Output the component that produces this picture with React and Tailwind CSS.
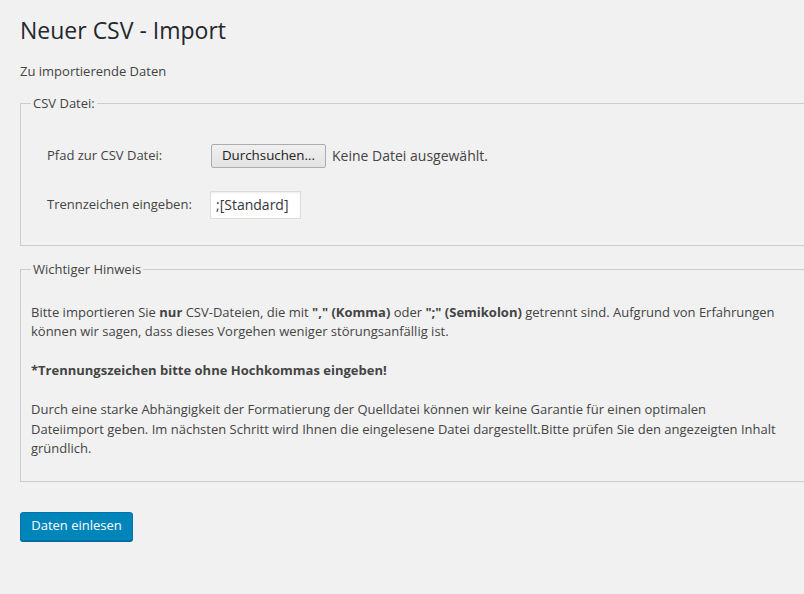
import React from 'react'

export default function App() {
  return (
    <div className="min-h-screen overflow-hidden bg-[#f1f1f1] pl-[20px] text-[13px] leading-[19.5px] text-[#444]"
         style={{ fontFamily: '"Open Sans", "Noto Sans", sans-serif' }}>
      <div className="w-[800px]">
        {/* Title */}
        <h1 className="pt-[16px] pb-[4px] text-[23px] leading-[29px] font-normal text-[#23282d]">
          Neuer CSV - Import
        </h1>
        <p className="mt-[13px]">Zu importierende Daten</p>

        {/* CSV Datei */}
        <fieldset className="mt-[12px] border border-[#ccc] px-[10px] pb-[26px]">
          <legend className="px-[2px]">CSV Datei:</legend>
          <div className="mt-[31px] flex flex-col gap-[23px] pl-[16px]">
            <div className="flex h-[24px] items-center">
              <span className="w-[164px]">Pfad zur CSV Datei:</span>
              <button className="h-[24px] w-[115px] rounded-[2px] border border-[#adadad] bg-gradient-to-b from-[#f0f0f0] to-[#e3e3e3] text-[13.33px] text-[#222]">
                Durchsuchen...
              </button>
              <span className="ml-[6px] text-[14px]">Keine Datei ausgewählt.</span>
            </div>
            <div className="flex h-[28px] items-center">
              <span className="w-[163px]">Trennzeichen eingeben:</span>
              <div className="flex h-[28px] w-[91px] items-center border border-[#ddd] bg-white px-[5px] text-[14px] text-[#32373c] shadow-[inset_0_1px_2px_rgba(0,0,0,0.07)]">
                ;[Standard]
              </div>
            </div>
          </div>
        </fieldset>

        {/* Wichtiger Hinweis */}
        <fieldset className="mt-[14px] border border-[#ccc] px-[10px] pb-[22px]">
          <legend className="px-[2px]">Wichtiger Hinweis</legend>
          <div className="mt-[23px] w-[748px]">
            <p>
              Bitte importieren Sie <b>nur</b> CSV-Dateien, die mit <b>"," (Komma)</b> oder <b>";" (Semikolon)</b> getrennt sind. Aufgrund von Erfahrungen können wir sagen, dass dieses Vorgehen weniger störungsanfällig ist.
            </p>
            <p className="mt-[19.5px] font-bold">*Trennungszeichen bitte ohne Hochkommas eingeben!</p>
            <p className="mt-[19.5px]">
              Durch eine starke Abhängigkeit der Formatierung der Quelldatei können wir keine Garantie für einen optimalen Dateiimport geben. Im nächsten Schritt wird Ihnen die eingelesene Datei dargestellt.Bitte prüfen Sie den angezeigten Inhalt gründlich.
            </p>
          </div>
        </fieldset>

        <button className="mt-[30px] h-[29px] w-[113px] rounded-[3px] border border-[#0073aa] bg-[#0085ba] text-white shadow-[0_1px_0_#006799]">
          Daten einlesen
        </button>
      </div>
    </div>
  )
}
